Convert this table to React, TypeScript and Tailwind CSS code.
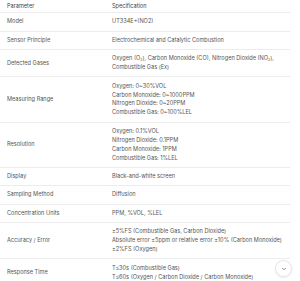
import React from "react";

const Sub = () => (
  <sub className="text-[3.5px] leading-none align-baseline relative top-[1px]">2</sub>
);

const rows: { p: string; s: React.ReactNode[] }[] = [
  { p: "Model", s: ["UT334E+(NO2)"] },
  { p: "Sensor Principle", s: ["Electrochemical and Catalytic Combustion"] },
  {
    p: "Detected Gases",
    s: [
      <>
        Oxygen (O<Sub />), Carbon Monoxide (CO), Nitrogen Dioxide (NO<Sub />),
      </>,
      "Combustible Gas (Ex)",
    ],
  },
  {
    p: "Measuring Range",
    s: [
      "Oxygen: 0~30%VOL",
      "Carbon Monoxide: 0~1000PPM",
      "Nitrogen Dioxide: 0~20PPM",
      "Combustible Gas: 0~100%LEL",
    ],
  },
  {
    p: "Resolution",
    s: [
      "Oxygen: 0.1%VOL",
      "Nitrogen Dioxide: 0.1PPM",
      "Carbon Monoxide: 1PPM",
      "Combustible Gas: 1%LEL",
    ],
  },
  { p: "Display", s: ["Black-and-white screen"] },
  { p: "Sampling Method", s: ["Diffusion"] },
  { p: "Concentration Units", s: ["PPM, %VOL, %LEL"] },
  {
    p: "Accuracy / Error",
    s: [
      "±5%FS (Combustible Gas, Carbon Dioxide)",
      "Absolute error ±5ppm or relative error ±10% (Carbon Monoxide)",
      "±2%FS (Oxygen)",
    ],
  },
  {
    p: "Response Time",
    s: ["T≤30s (Combustible Gas)", "T≤60s (Oxygen / Carbon Dioxide / Carbon Monoxide)"],
  },
];

export default function App() {
  return (
    <div
      className="relative w-[300px] h-[281px] overflow-hidden bg-white"
      style={{ fontFamily: "Inter, 'Noto Sans', sans-serif" }}
    >
      <div className="w-[290px]">
        <div className="flex h-[13px] items-center border-b border-[#ececec] text-[5.6px] leading-[8.9px] text-[#444]">
          <div className="w-[105px] pl-[7px]">Parameter</div>
          <div className="flex-1 pl-[7px]">Specification</div>
        </div>
        {rows.map((r) => (
          <div
            key={r.p}
            className="flex items-center border-b border-[#ececec] py-[4.3px] text-[5.6px] leading-[8.9px] text-[#555]"
          >
            <div className="w-[105px] pl-[7px]">{r.p}</div>
            <div className="flex-1 pl-[7px] flex flex-col">
              {r.s.map((l, i) => (
                <div key={i} className="whitespace-nowrap h-[8.9px]">
                  {l}
                </div>
              ))}
            </div>
          </div>
        ))}
      </div>
      <div className="absolute left-[275px] top-[260px] flex h-[17px] w-[17px] items-center justify-center rounded-full border border-[#e5e5e5] bg-white shadow-[0_1px_2px_rgba(0,0,0,0.08)]">
        <svg width="6" height="6" viewBox="0 0 24 24" fill="none" stroke="#666" strokeWidth="3" strokeLinecap="round" strokeLinejoin="round">
          <path d="M6 9l6 6 6-6" />
        </svg>
      </div>
    </div>
  );
}
